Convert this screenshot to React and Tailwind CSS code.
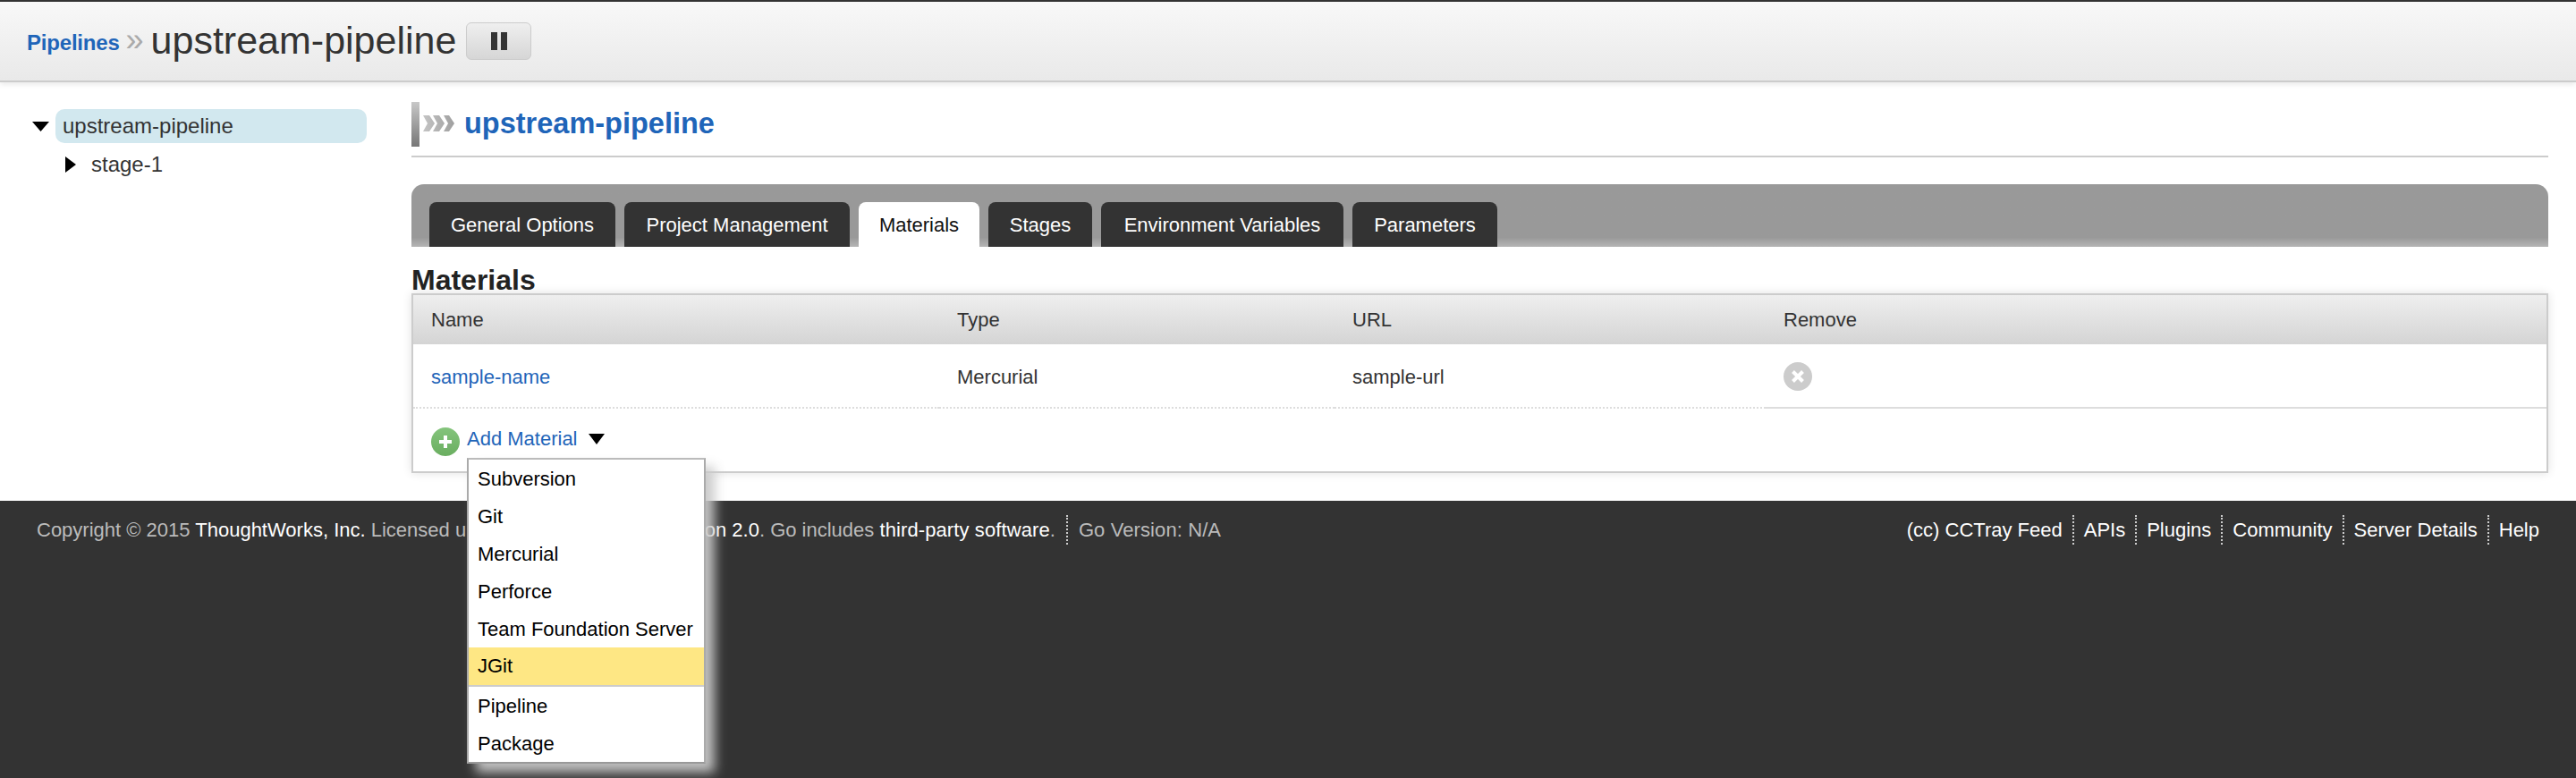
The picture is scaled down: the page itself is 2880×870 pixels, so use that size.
const tabs = [
  ["General Options", "w-[208px]"],
  ["Project Management", "w-[252px]"],
  ["Materials", "w-[135px]"],
  ["Stages", "w-[116px]"],
  ["Environment Variables", "w-[271px]"],
  ["Parameters", "w-[162px]"],
];
const items = ["Subversion", "Git", "Mercurial", "Perforce", "Team Foundation Server", "JGit", "Pipeline", "Package"];
const rightLinks = ["(cc) CCTray Feed", "APIs", "Plugins", "Community", "Server Details", "Help"];

function Chevrons() {
  return (
    <svg width="36" height="20" viewBox="0 0 36 20" className="block">
      <defs>
        <linearGradient id="chev" x1="0" y1="0" x2="1" y2="0">
          <stop offset="0" stopColor="#c4c4c4" />
          <stop offset="1" stopColor="#a0a0a0" />
        </linearGradient>
      </defs>
      <path d="M0 1h7l6 9-6 9H0l5-9z M11 1h7l6 9-6 9h-7l5-9z M23 1h6l6 9-6 9h-6l5-9z" fill="url(#chev)" />
    </svg>
  );
}

export default function App() {
  return (
    <div className="flex flex-col h-[870px] w-[2880px] overflow-hidden bg-white text-[22px] font-['Liberation_Sans',Arial,sans-serif] text-[#333]">
      <header className="h-[92px] shrink-0 flex items-center pl-[30px] pt-[2px] border-t-2 border-b-2 border-t-[#333] border-b-[#ccc] bg-gradient-to-b from-[#f8f8f8] to-[#e9e9e9] shadow-[0_2px_6px_rgba(0,0,0,0.1)]">
        <a className="text-[24px] font-bold text-[#1f65b9] tracking-[-0.2px] mt-[2px]">Pipelines</a>
        <span className="text-[36px] leading-none text-[#aaa] ml-[7px] w-[22px] -mt-[4px]">»</span>
        <h1 className="text-[43px] leading-none text-[#333] ml-[6px] -mt-[4px]">upstream-pipeline</h1>
        <button className="ml-[11px] w-[73px] h-[42px] rounded-[6px] border border-[#ccc] bg-gradient-to-b from-[#efefef] to-[#d6d6d6] flex items-center justify-center gap-[4px] -mt-[2px]">
          <span className="w-[7px] h-[20px] bg-[#333]" />
          <span className="w-[7px] h-[20px] bg-[#333]" />
        </button>
      </header>

      <main className="flex shrink-0">
        <aside className="w-[460px] shrink-0 pt-[30px] pl-[36px]">
          <div className="flex items-center gap-[7px]">
            <svg width="19" height="11" viewBox="0 0 19 11"><path d="M0 0h19L9.5 11z" fill="#000" /></svg>
            <div className="w-[348px] h-[38px] rounded-[10px] bg-[#d2e8ef] pl-[8px] flex items-center text-[24px] text-[#333]">upstream-pipeline</div>
          </div>
          <div className="flex items-center h-[48px] pl-[37px] gap-[17px]">
            <svg width="12" height="18" viewBox="0 0 12 18"><path d="M0 0l12 9L0 18z" fill="#000" /></svg>
            <span className="text-[24px] text-[#333]">stage-1</span>
          </div>
        </aside>

        <section className="w-[2389px] pt-[22px] pb-[31px]">
          <div className="h-[62px] border-b-2 border-[#ccc] flex items-start">
            <div className="w-[9px] h-[50px] bg-gradient-to-b from-[#c8c8c8] to-[#777]" />
            <div className="ml-[4px] mt-[14px]"><Chevrons /></div>
            <h2 className="ml-[10px] mt-[4px] text-[32.5px] leading-[40px] font-bold text-[#1f65b9]">upstream-pipeline</h2>
          </div>

          <div className="mt-[30px] h-[70px] pl-[20px] rounded-t-[14px] bg-gradient-to-b from-[#999] from-85% to-[#b5b5b5] flex items-end gap-[10px]">
            {tabs.map(([t, w]) => (
              <div
                key={t}
                className={
                  w +
                  " h-[50px] rounded-t-[8px] flex items-center justify-center text-[22px] " +
                  (t === "Materials" ? "bg-white text-[#111]" : "bg-[#333] text-white")
                }
              >
                {t}
              </div>
            ))}
          </div>

          <h3 className="h-[52px] pt-[20px] text-[32px] leading-[34px] font-bold text-[#222]">Materials</h3>

          <div className="border-2 border-[#ccc] shadow-[0_0_10px_rgba(0,0,0,0.12)]">
            <div className="grid grid-cols-[588px_442px_482px_1fr] h-[55px] items-center bg-gradient-to-b from-[#efefef] to-[#d4d4d4] text-[#333]">
              <div className="pl-[20px]">Name</div>
              <div className="pl-[20px]">Type</div>
              <div className="pl-[20px]">URL</div>
              <div className="pl-[20px]">Remove</div>
            </div>
            <div className="grid grid-cols-[588px_442px_482px_1fr] h-[72px] items-stretch">
              <div className="pl-[20px] pt-[2px] flex items-center border-b-2 border-dotted border-[#ddd] text-[#1f65b9]">sample-name</div>
              <div className="pl-[20px] pt-[2px] flex items-center border-b-2 border-dotted border-[#ddd]">Mercurial</div>
              <div className="pl-[20px] pt-[2px] flex items-center border-b-2 border-dotted border-[#ddd]">sample-url</div>
              <div className="pl-[20px] pt-[2px] flex items-center border-b-2 border-[#ddd]">
                <svg width="32" height="32" viewBox="0 0 32 32">
                  <circle cx="16" cy="16" r="16" fill="#ccc" />
                  <path d="M10.5 10.5l11 11M21.5 10.5l-11 11" stroke="#fff" strokeWidth="4" />
                </svg>
              </div>
            </div>
            <div className="relative h-[70px] pl-[20px] flex items-start">
              <svg width="32" height="32" viewBox="0 0 32 32" className="mt-[21px]">
                <defs>
                  <linearGradient id="grn" x1="0" y1="0" x2="0" y2="1">
                    <stop offset="0" stopColor="#84c47c" />
                    <stop offset="1" stopColor="#6aae60" />
                  </linearGradient>
                </defs>
                <circle cx="16" cy="16" r="16" fill="url(#grn)" />
                <path d="M16 9v14M9 16h14" stroke="#fff" strokeWidth="4" />
              </svg>
              <a className="ml-[8px] mt-[18px] leading-[32px] text-[#1f65b9]">Add Material</a>
              <svg width="18" height="12" viewBox="0 0 18 12" className="ml-[12px] mt-[28px]"><path d="M0 0h18L9 12z" fill="#000" /></svg>

              <ul className="absolute z-10 left-[60px] top-[55px] w-[267px] border-2 border-t-[#bbb] border-x-[#aaa] border-b-[#999] bg-white shadow-[10px_10px_12px_rgba(200,200,200,0.95)] text-[22px] text-black">
                {items.map((i) => (
                  <li
                    key={i}
                    className={
                      "pl-[10px] flex items-center " +
                      (i === "JGit" ? "h-[44px] pb-[2px] bg-[#fee784] border-b-2 border-[#ccc]" : "h-[42px]")
                    }
                  >
                    {i}
                  </li>
                ))}
              </ul>
            </div>
          </div>
        </section>
      </main>

      <footer className="flex-1 bg-[#333] flex items-start justify-between pl-[41px] pr-[41px] pt-[21px] text-[22px] text-[#bbb]">
        <div className="flex items-center h-[22px]">
          <span>
            Copyright © 2015 <a className="text-white">ThoughtWorks, Inc.</a> Licensed under{" "}
            <a className="text-white">Apache License, Version 2.0</a>. Go includes{" "}
            <a className="text-white tracking-[0.1px]">third-party software</a>.
          </span>
          <span className="ml-[12px] pl-[12px] border-l-2 border-dotted border-[#ccc] tracking-[0.1px]">Go Version: N/A</span>
        </div>
        <div className="flex items-center h-[22px] text-white">
          {rightLinks.map((l, i) => (
            <span
              key={l}
              className={i === 0 ? "pr-[11px]" : "pl-[11px] pr-[11px] last:pr-0 border-l-2 border-dotted border-[#ccc]"}
            >
              {l}
            </span>
          ))}
        </div>
      </footer>
    </div>
  );
}
